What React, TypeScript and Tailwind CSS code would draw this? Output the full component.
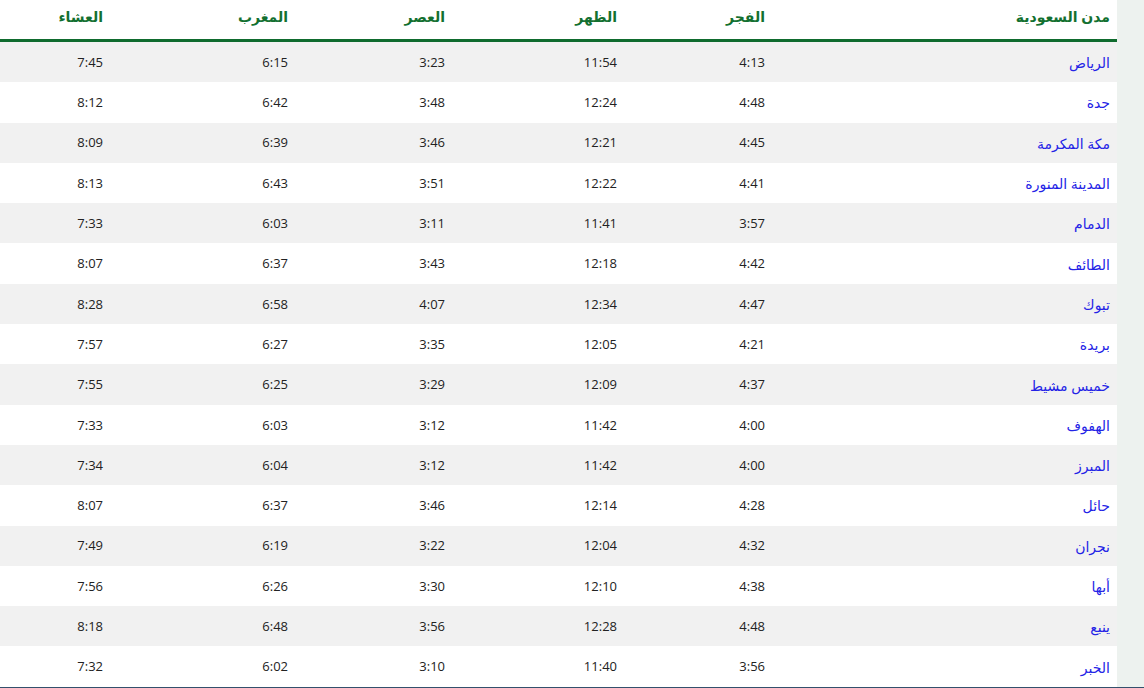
import React from 'react';

const rows = [
  ['الرياض', '4:13', '11:54', '3:23', '6:15', '7:45'],
  ['جدة', '4:48', '12:24', '3:48', '6:42', '8:12'],
  ['مكة المكرمة', '4:45', '12:21', '3:46', '6:39', '8:09'],
  ['المدينة المنورة', '4:41', '12:22', '3:51', '6:43', '8:13'],
  ['الدمام', '3:57', '11:41', '3:11', '6:03', '7:33'],
  ['الطائف', '4:42', '12:18', '3:43', '6:37', '8:07'],
  ['تبوك', '4:47', '12:34', '4:07', '6:58', '8:28'],
  ['بريدة', '4:21', '12:05', '3:35', '6:27', '7:57'],
  ['خميس مشيط', '4:37', '12:09', '3:29', '6:25', '7:55'],
  ['الهفوف', '4:00', '11:42', '3:12', '6:03', '7:33'],
  ['المبرز', '4:00', '11:42', '3:12', '6:04', '7:34'],
  ['حائل', '4:28', '12:14', '3:46', '6:37', '8:07'],
  ['نجران', '4:32', '12:04', '3:22', '6:19', '7:49'],
  ['أبها', '4:38', '12:10', '3:30', '6:26', '7:56'],
  ['ينبع', '4:48', '12:28', '3:56', '6:48', '8:18'],
  ['الخبر', '3:56', '11:40', '3:10', '6:02', '7:32'],
];

const headers = ['مدن السعودية', 'الفجر', 'الظهر', 'العصر', 'المغرب', 'العشاء'];
const widths = ['w-[345px]', 'w-[148px]', 'w-[172px]', 'w-[157px]', 'w-[185px]', 'w-[110px]'];

const App = () => {
  return (
    <div className="w-[1144px] h-[688px] overflow-hidden bg-[#edf2ef] flex flex-col font-['Open_Sans','DejaVu_Sans',sans-serif]">
      <div className="flex flex-1">
        <div className="w-[1117px] bg-white" dir="rtl">
          <div className="flex h-[42px] border-b-[3px] border-[#0f6b2e]">
            {headers.map((h, i) => (
              <div key={i} className={`${widths[i]} pr-[7px] pt-[6px] text-[14px] font-bold text-[#137030]`}>
                {h}
              </div>
            ))}
          </div>
          {rows.map((r, ri) => (
            <div key={ri} className={`flex h-[40.3px] items-center pt-[1px] ${ri % 2 === 0 ? 'bg-[#f1f1f1]' : 'bg-white'}`}>
              {r.map((c, ci) => (
                <div
                  key={ci}
                  className={`${widths[ci]} pr-[7px] ${ci === 0 ? 'text-[14px] text-[#2323e6]' : 'text-[13px] text-[#222]'}`}
                >
                  {c}
                </div>
              ))}
            </div>
          ))}
        </div>
        <div className="flex-1" />
      </div>
      <div className="h-[2px] bg-[#34506c]" />
    </div>
  );
};

export default App;
